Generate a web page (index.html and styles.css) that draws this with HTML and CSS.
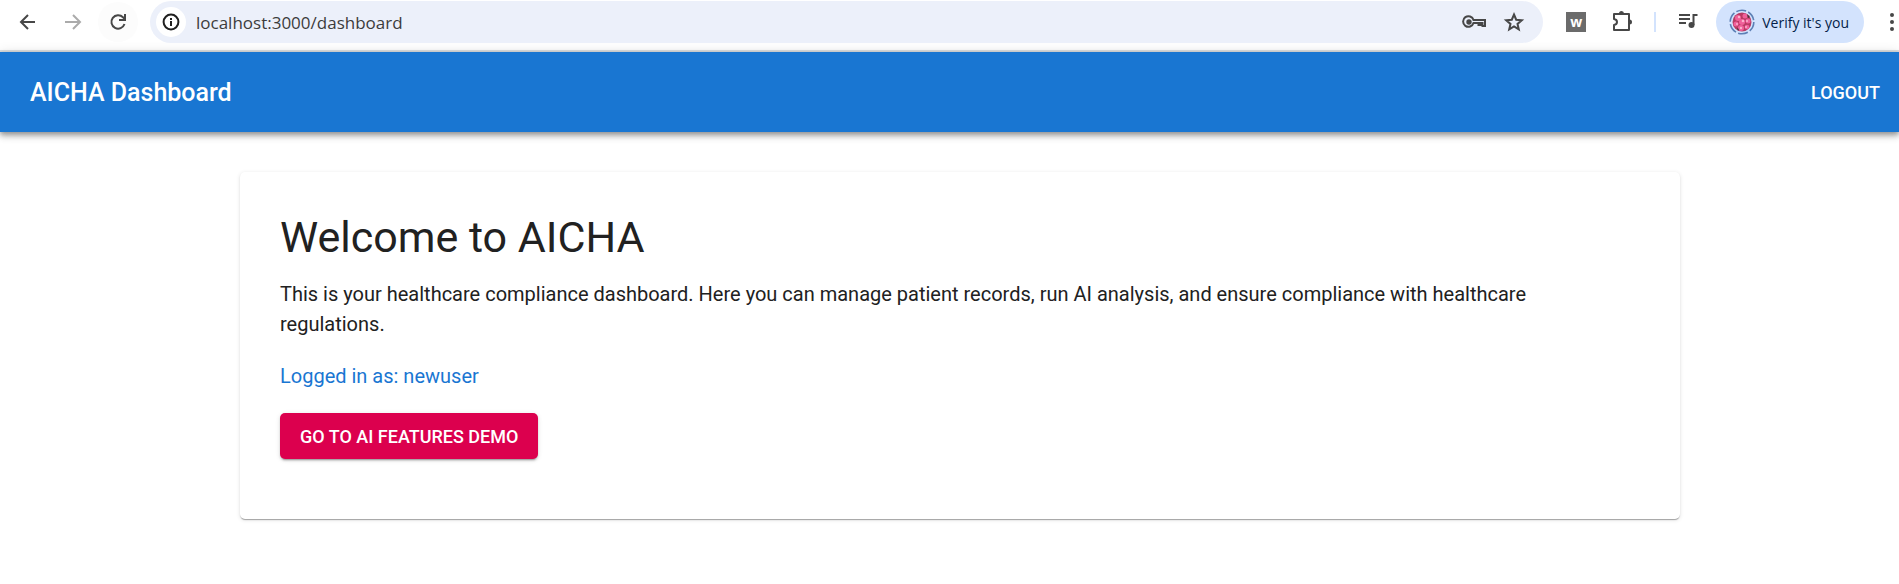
FILE: index.html
```
<!DOCTYPE html>
<html lang="en">
<head>
    <meta charset="UTF-8">
    <meta name="viewport" content="width=device-width, initial-scale=1.0">
    <title>AICHA Dashboard</title>
    <link rel="stylesheet" href="styles.css">
</head>
<body>
    <!-- Browser toolbar -->
    <div class="browser-bar">
        <div class="nav-buttons">
            <button type="button" class="icon-btn" aria-label="Back">
                <svg width="24" height="24" viewBox="0 0 24 24" fill="none" stroke="#474747" stroke-width="2"><path d="M19 12H5M12 5l-7 7 7 7"/></svg>
            </button>
            <button type="button" class="icon-btn" aria-label="Forward">
                <svg width="24" height="24" viewBox="0 0 24 24" fill="none" stroke="#ababab" stroke-width="2"><path d="M4 12h14M12 5l7 7-7 7"/></svg>
            </button>
            <button type="button" class="icon-btn reload" aria-label="Reload">
                <svg width="24" height="24" viewBox="0 0 24 24" fill="none" stroke="#474747" stroke-width="2"><path d="M18.500 14a6.700 6.700 0 1 1-1.500-6.700l2 2M19 4v6h-6"/></svg>
            </button>
        </div>

        <form class="address-bar">
            <button type="button" class="site-info" aria-label="View site information">
                <svg width="18" height="18" viewBox="0 0 18 18" fill="none" stroke="#1f1f1f" stroke-width="2"><circle cx="9" cy="9" r="7.400"/><path d="M9 8v5M9 5v2"/></svg>
            </button>
            <input type="text" class="address" aria-label="Address" value="localhost:3000/dashboard">
            <button type="button" class="icon-btn" aria-label="Passwords">
                <svg width="24" height="24" viewBox="0 0 24 24" fill="none" stroke="#474747" stroke-width="2"><path d="M11.500 10H23v6h-2.500v-3h-2v2h-2v-2h-5a5.300 5.300 0 1 1 0-3z"/><circle cx="7" cy="12" r="2.700" fill="#474747" stroke="none"/></svg>
            </button>
            <button type="button" class="icon-btn" aria-label="Bookmark">
                <svg width="24" height="24" viewBox="0 0 24 24" fill="none" stroke="#474747" stroke-width="2"><path d="M12 4.500l2.200 5.200 5.600.5-4.300 3.700 1.300 5.500-4.800-2.900-4.800 2.900 1.300-5.500-4.300-3.700 5.600-.5z"/></svg>
            </button>
        </form>

        <div class="extensions">
            <button type="button" class="icon-btn" aria-label="W extension"><span class="w-badge">w</span></button>
            <button type="button" class="icon-btn" aria-label="Extensions">
                <svg width="24" height="24" viewBox="0 0 24 24" fill="none" stroke="#474747" stroke-width="2"><path d="M4 4h15v16H4v-5c4-.5 4-5.500 0-6z" stroke-linejoin="round"/><path d="M9 3.500a2.500 2.500 0 0 1 5 0zM19.500 9.500a2.500 2.500 0 0 1 0 5z" fill="#474747" stroke="none"/></svg>
            </button>
            <span class="separator"></span>
            <button type="button" class="icon-btn" aria-label="Media controls">
                <svg width="24" height="24" viewBox="0 0 24 24" fill="none" stroke="#474747" stroke-width="2"><path d="M3 5h11M3 9h11M3 13h7M17.500 15V5h4"/><circle cx="15.500" cy="15" r="3" fill="#474747" stroke="none"/></svg>
            </button>
        </div>

        <button type="button" class="profile">
            <svg width="26" height="26" viewBox="0 0 26 26">
                <circle cx="13" cy="13" r="11.800" fill="none" stroke="#5c7fb5" stroke-width="1.600" stroke-dasharray="10 2.350"/>
                <circle cx="13" cy="13" r="9.500" fill="#b93a62"/>
                <g fill="#f0609a"><circle cx="9" cy="9" r="3"/><circle cx="16" cy="7" r="2.500"/><circle cx="19" cy="12" r="2.500"/><circle cx="13" cy="13" r="3"/><circle cx="7" cy="15" r="2.500"/><circle cx="12" cy="19" r="3"/><circle cx="18" cy="18" r="2.300"/></g>
                <g fill="#fbb2cc"><circle cx="10" cy="8" r="1.200"/><circle cx="14" cy="12" r="1.300"/><circle cx="18" cy="12" r="1"/><circle cx="8" cy="15" r="1"/><circle cx="12" cy="19" r="1.200"/><circle cx="17" cy="18" r="1"/></g>
                <path d="M18 5l3 3-2 1zM8 19l2 1-1 2z" fill="#413a3c"/>
            </svg>
            <span>Verify it's you</span>
        </button>
        <button type="button" class="menu" aria-label="Menu">
            <svg width="6" height="20" viewBox="0 0 6 20" fill="#474747"><circle cx="3" cy="3" r="2"/><circle cx="3" cy="10" r="2"/><circle cx="3" cy="17" r="2"/></svg>
        </button>
    </div>

    <!-- App header -->
    <header class="app-bar">
        <div class="app-title">AICHA Dashboard</div>
        <button type="button" class="logout">LOGOUT</button>
    </header>

    <main class="content">
        <section class="card">
            <h1>Welcome to AICHA</h1>
            <p>This is your healthcare compliance dashboard. Here you can manage patient records, run AI analysis, and ensure compliance with healthcare regulations.</p>
            <p class="user">Logged in as: newuser</p>
            <button type="button" class="demo-btn">GO TO AI FEATURES DEMO</button>
        </section>
    </main>
</body>
</html>
```
FILE: styles.css
```
* {
    box-sizing: border-box;
}

body {
    margin: 0;
    font-family: Roboto, sans-serif;
    color: #212121;
    background-color: #fff;
}

button {
    padding: 0;
    border: none;
    background: none;
    font-family: inherit;
    cursor: pointer;
}

svg {
    display: block;
}

/* Browser toolbar */
.browser-bar {
    display: flex;
    align-items: center;
    height: 52px;
    padding: 0 0 6px 8px;
    border-bottom: 2px solid #dfe1e2;
    font-family: "Open Sans", sans-serif;
}

.nav-buttons {
    display: flex;
    gap: 5px;
    margin-right: 12px;
}

.icon-btn {
    display: flex;
    align-items: center;
    justify-content: center;
    width: 40px;
    height: 40px;
    border-radius: 50%;
}

.reload {
    background-color: #fcfcfc;
}

.address-bar {
    display: flex;
    flex: 1;
    align-items: center;
    height: 42px;
    padding: 0 9px 0 6px;
    border-radius: 21px;
    background-color: #ecf0fa;
}

.site-info {
    display: flex;
    align-items: center;
    justify-content: center;
    width: 30px;
    height: 30px;
    border-radius: 50%;
    background-color: #fff;
}

.address {
    flex: 1;
    margin-left: 10px;
    padding: 0;
    border: none;
    outline: none;
    background: none;
    font-family: "Open Sans", sans-serif;
    font-size: 17px;
    color: #3c3c3c;
}

.extensions {
    display: flex;
    align-items: center;
    gap: 6px;
    margin: 0 8px 0 13px;
}

.w-badge {
    width: 20px;
    height: 20px;
    background-color: #6b6b6b;
    color: #fff;
    font-size: 14px;
    font-weight: bold;
    line-height: 20px;
}

.separator {
    width: 2px;
    height: 20px;
    margin: 0 6px;
    background-color: #d3e3fd;
}

.profile {
    display: flex;
    align-items: center;
    gap: 7px;
    height: 42px;
    padding: 0 15px 0 13px;
    border-radius: 21px;
    background-color: #d3e3fd;
    color: #041e49;
    font-size: 14px;
}

.menu {
    margin: 0 4px 0 25px;
}

/* App header */
.app-bar {
    display: flex;
    align-items: center;
    justify-content: space-between;
    height: 80px;
    padding: 0 19px 0 30px;
    background-color: #1976d2;
    color: #fff;
    box-shadow: 0 2px 5px rgba(0, 0, 0, 0.3), 0 5px 6px rgba(0, 0, 0, 0.14), 0 1px 12px rgba(0, 0, 0, 0.12);
}

.app-title {
    font-size: 25px;
    font-weight: 500;
}

.logout {
    color: #fff;
    font-size: 18px;
    font-weight: 500;
}

/* Page content */
.content {
    padding: 40px 0 40px 21px;
}

.card {
    max-width: 1440px;
    margin: 0 auto;
    padding: 40px 40px 60px;
    border-radius: 5px;
    background-color: #fff;
    box-shadow: 0 2px 1px -1px rgba(0, 0, 0, 0.2), 0 1px 1px rgba(0, 0, 0, 0.14), 0 1px 4px rgba(0, 0, 0, 0.12);
}

h1 {
    margin: 0 0 17px;
    font-size: 43px;
    font-weight: 400;
    line-height: 50px;
}

p {
    max-width: 1320px;
    margin: 0 0 22px;
    font-size: 20px;
    line-height: 30px;
}

.user {
    color: #1976d2;
}

.demo-btn {
    height: 46px;
    padding: 0 20px;
    border-radius: 5px;
    background-color: #dc004e;
    color: #fff;
    font-size: 18px;
    font-weight: 500;
    box-shadow: 0 3px 1px -2px rgba(0, 0, 0, 0.2), 0 2px 2px rgba(0, 0, 0, 0.14), 0 1px 5px rgba(0, 0, 0, 0.12);
}
```
